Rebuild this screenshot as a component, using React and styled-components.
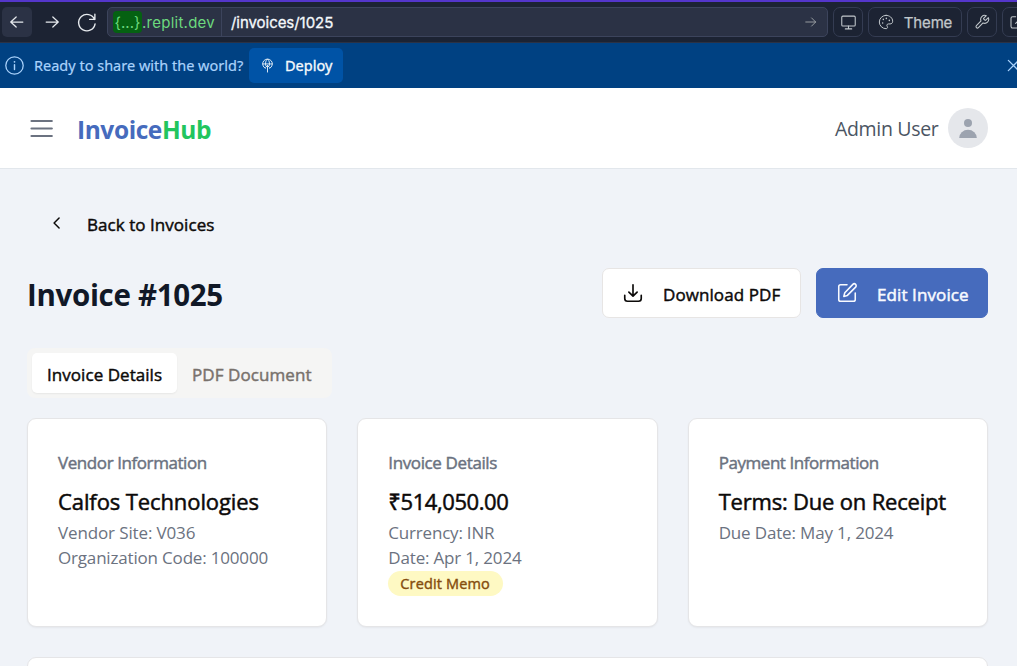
import React from 'react';
import styled, { createGlobalStyle } from 'styled-components';

const GlobalStyle = createGlobalStyle`
  * { box-sizing: border-box; }
  html, body { margin: 0; height: 666px; overflow: hidden; background: #f0f3f8; }
  body { font-family: "Open Sans", "Noto Sans", sans-serif; color: #0c0a09; }
  button { font: inherit; color: inherit; margin: 0; padding: 0; border: 0; background: none; }
  svg { flex: none; }
`;

const Page = styled.div`
  width: 1017px;
  height: 666px;
  overflow: hidden;
  background: #f0f3f8;
`;

const Label = styled.span`
  white-space: nowrap;
  letter-spacing: ${(p) => p.$track || 0}px;
  -webkit-text-stroke: ${(p) => p.$weight || 0}px currentColor;
`;

const BrowserBar = styled.div`
  display: flex;
  align-items: center;
  height: 43px;
  padding: 0 0 0 2px;
  border-top: 2px solid #5436cb;
  border-bottom: 1px solid #2b3245;
  background: #1c2333;
  color: #c2c8cc;
  font-family: Inter, Roboto, sans-serif;
  font-size: 15px;
  overflow: hidden;
`;

const NavButton = styled.button`
  flex: none;
  display: flex;
  align-items: center;
  justify-content: center;
  width: ${(p) => p.$w || 30}px;
  height: 30px;
  border-radius: 5px;
  color: #e6eaee;
  background: ${(p) => (p.$active ? '#2b3245' : 'transparent')};
`;

const AddressBar = styled.div`
  flex: none;
  display: flex;
  align-items: center;
  width: 721px;
  height: 30px;
  margin-left: 5px;
  padding: 0 9px 0 5px;
  border: 1px solid #3c445c;
  border-radius: 5px;
  background: #2b3245;
  color: #9da2a6;
`;

const Host = styled.div`
  display: flex;
  align-items: center;
  width: 109px;
  height: 28px;
  border-right: 1px solid #3c445c;
  color: #6cd97e;
`;

const HostChip = styled.span`
  display: flex;
  align-items: center;
  justify-content: center;
  width: 29px;
  height: 22px;
  border-radius: 4px;
  background: #056112;
`;

const Path = styled.span`
  flex: 1;
  padding-left: 9px;
  color: #f5f9fc;
`;

const ToolButton = styled.button`
  flex: none;
  display: flex;
  align-items: center;
  justify-content: center;
  gap: 10px;
  width: ${(p) => p.$w || 30}px;
  height: 30px;
  margin-left: 5px;
  border: 1px solid #343c52;
  border-radius: 7px;
`;

const Banner = styled.div`
  display: flex;
  align-items: center;
  height: 45px;
  padding-left: 5px;
  background: #004182;
  color: #a9d2fb;
  font-family: "Noto Sans", sans-serif;
  font-size: 14.5px;
  overflow: hidden;
`;

const BannerText = styled.div`
  flex: none;
  width: 225px;
  padding: 0 0 2px 10px;
`;

const DeployButton = styled.button`
  flex: none;
  display: flex;
  align-items: center;
  gap: 10px;
  width: 94px;
  height: 35px;
  padding: 0 0 1px 11px;
  border-radius: 5px;
  background: #0053a6;
  color: #f5f9fc;
`;

const BannerClose = styled.button`
  flex: none;
  display: flex;
  margin-left: 661px;
`;

const AppHeader = styled.header`
  display: flex;
  align-items: center;
  height: 81px;
  padding: 0 29px 1px 30px;
  border-bottom: 1px solid #e2e7ec;
  background: #fff;
`;

const MenuButton = styled.button`
  display: flex;
  padding-top: 3px;
  color: #6b7280;
`;

const Brand = styled.div`
  flex: 1;
  margin: 4px 0 0 24px;
  font-size: 24.5px;
  font-weight: 700;
  line-height: 32px;
  color: #466bbd;
`;

const BrandAccent = styled.span`
  color: #22c55e;
`;

const UserName = styled.div`
  width: 113px;
  padding-top: 3px;
  font-size: 19.5px;
  line-height: 28px;
  color: #4b5563;
`;

const Avatar = styled.div`
  display: flex;
  width: 40px;
  height: 40px;
  align-items: center;
  justify-content: center;
  border-radius: 50%;
  background: #e5e7eb;
`;

const Main = styled.main`
  padding: 30px 29px 0 27px;
`;

const BackLink = styled.button`
  display: flex;
  align-items: center;
  height: 50px;
  padding-left: 20px;
  font-size: 17px;
`;

const BackIcon = styled.span`
  display: flex;
  padding-bottom: 2px;
`;

const BackText = styled.span`
  padding: 1px 0 0 20px;
`;

const TitleRow = styled.div`
  display: flex;
  align-items: center;
  height: 50px;
  margin-top: 19px;
`;

const Title = styled.h1`
  flex: 1;
  margin: 3px 0 0;
  font-size: 29.5px;
  line-height: 38px;
  font-weight: 700;
  color: #111827;
`;

const ActionButton = styled.button`
  display: flex;
  align-items: center;
  width: ${(p) => p.$w}px;
  height: 50px;
  margin-left: ${(p) => p.$gap || 0}px;
  padding-left: 19px;
  border: 1px solid ${(p) => (p.$primary ? '#466bbd' : '#e7e5e4')};
  border-radius: 7px;
  background: ${(p) => (p.$primary ? '#466bbd' : '#fff')};
  color: ${(p) => (p.$primary ? '#f8faff' : '#0c0a09')};
  font-size: 17px;
`;

const ActionText = styled.span`
  padding: 3px 0 0 19px;
`;

const TabList = styled.div`
  display: flex;
  width: 305px;
  height: 50px;
  margin-top: 30px;
  padding: 5px;
  border-radius: 8px;
  background: #f5f5f4;
`;

const Tab = styled.button`
  display: flex;
  align-items: center;
  width: ${(p) => p.$w}px;
  height: 40px;
  padding: 3px 0 0 15px;
  border-radius: 5px;
  font-size: 17px;
  color: ${(p) => (p.$active ? '#0c0a09' : '#78716c')};
  background: ${(p) => (p.$active ? '#fff' : 'transparent')};
  box-shadow: ${(p) => (p.$active ? '0 1px 2px rgba(0,0,0,.06)' : 'none')};
`;

const Cards = styled.div`
  display: grid;
  grid-template-columns: repeat(3, 1fr);
  gap: 30px;
  margin-top: 20px;
`;

const Card = styled.section`
  height: 209px;
  padding: 31px 30px;
  border: 1px solid #e5e5e7;
  border-radius: 9px;
  background: #fff;
  box-shadow: 0 1px 2px rgba(0, 0, 0, 0.05);
`;

const CardTitle = styled.h3`
  margin: 0;
  font-size: 17px;
  line-height: 26px;
  font-weight: 400;
  color: #6b7280;
`;

const CardLead = styled.div`
  margin-top: 9px;
  font-size: 22px;
  line-height: 32px;
`;

const CardLine = styled.div`
  font-size: 17px;
  line-height: 25px;
  color: #6b7280;
`;

const CardLines = styled.div`
  padding: 3px 0 1px;
`;

const Badge = styled.div`
  display: flex;
  align-items: center;
  width: 115px;
  height: 25px;
  padding-left: 12px;
  border-radius: 13px;
  background: #fef9c3;
  color: #854d0e;
  font-size: 14.5px;
`;

const NextPanel = styled.section`
  height: 60px;
  margin-top: 30px;
  border: 1px solid #e5e5e7;
  border-radius: 9px;
  background: #fff;
`;

const Icon = ({ size = 20, w = 2, box = 24, children }) => (
  <svg width={size} height={size} viewBox={`0 0 ${box} ${box}`} fill="none" stroke="currentColor" strokeWidth={w} strokeLinecap="round" strokeLinejoin="round">
    {children}
  </svg>
);

const MEDIUM = 0.45;

const cards = [
  { title: 'Vendor Information', tt: -0.42, lead: 'Calfos Technologies', lt: -0.1, lines: [['Vendor Site: V036', -0.13], ['Organization Code: 100000', -0.18]] },
  { title: 'Invoice Details', tt: -0.38, lead: '₹514,050.00', lt: -0.42, lines: [['Currency: INR', -0.2], ['Date: Apr 1, 2024', -0.18]], badge: 'Credit Memo' },
  { title: 'Payment Information', tt: -0.45, lead: 'Terms: Due on Receipt', lt: -0.2, lines: [['Due Date: May 1, 2024', -0.16]] },
];

export default function App() {
  return (
    <Page>
      <GlobalStyle />
      <BrowserBar>
        <NavButton $active>
          <Icon w={1.5}><path d="M19 12H4.500M11 6l-6.500 6 6.500 6" /></Icon>
        </NavButton>
        <NavButton $w={40}>
          <Icon w={1.5}><path d="M5 12h14M13 6l6.500 6-6.500 6" /></Icon>
        </NavButton>
        <NavButton>
          <Icon size={22} w={1.5}><path d="M20.6 3.5v5.700h-5.700M20.2 9.200A9 9 0 1 0 20.800 14" /></Icon>
        </NavButton>
        <AddressBar>
          <Host>
            <HostChip><Label>{'{...}'}</Label></HostChip>
            <Label $track={0.25}>.replit.dev</Label>
          </Host>
          <Path><Label $weight={0.3} $track={-0.05}>/invoices/1025</Label></Path>
          <Icon size={14} w={1.6}><path d="M3 12h17M13 5l7 7-7 7" /></Icon>
        </AddressBar>
        <ToolButton>
          <Icon size={17} w={1.500}><rect x="2.500" y="3" width="19" height="14" rx="1.500" /><path d="M12 17v4M7.500 21h9" /></Icon>
        </ToolButton>
        <ToolButton $w={94}>
          <Icon size={16} w={1.500}>
            <path d="M12 2a10 10 0 0 0 0 20c1.600 0 2.300-1 2.300-2.100 0-1.400-1-1.700-1-3 0-1.200 1-2 2.200-2H18c2.400 0 4-1.500 4-4C22 5.800 17.500 2 12 2z" />
            <path d="M7 13.500v.1M8 8v.1M12.500 6.500v.1M17 9.500v.1" strokeWidth="2.200" />
          </Icon>
          <Label $weight={0.25} $track={-0.15}>Theme</Label>
        </ToolButton>
        <ToolButton>
          <Icon size={16} w={1.600}><path d="M14.700 6.300a1 1 0 0 0 0 1.400l1.600 1.600a1 1 0 0 0 1.400 0l3.770-3.770a6 6 0 0 1-7.940 7.940l-6.910 6.910a2.120 2.120 0 0 1-3-3l6.910-6.910a6 6 0 0 1 7.940-7.940z" /></Icon>
        </ToolButton>
        <ToolButton>
          <Icon size={16} w={1.600}><path d="M10 4H5.500A2.500 2.500 0 0 0 3 6.500v12A2.500 2.500 0 0 0 5.500 21h12a2.500 2.500 0 0 0 2.500-2.500V14M14 3h7v7M21 3 10 14" /></Icon>
        </ToolButton>
      </BrowserBar>

      <Banner>
        <Icon size={19} w={1.600}><circle cx="12" cy="12" r="11" /><path d="M12 11v6" strokeWidth="1.800" /><path d="M12 7.300v.1" strokeWidth="2.200" /></Icon>
        <BannerText><Label $weight={0.2}>Ready to share with the world?</Label></BannerText>
        <DeployButton>
          <Icon size={15} w={1.400}>
            <path d="M8.500 16.500a7.800 7.800 0 1 1 7 0M4.500 9.500h15M9.300 12.500c-1.200-3.800-.4-8.500 2.700-11 3.100 2.500 3.900 7.200 2.700 11M12 22.500V12M9 15l3-3 3 3" />
          </Icon>
          <Label $weight={0.35}>Deploy</Label>
        </DeployButton>
        <BannerClose><Icon size={19} w={1.600}><path d="M5.500 5.500l13 13M18.500 5.500l-13 13" /></Icon></BannerClose>
      </Banner>

      <AppHeader>
        <MenuButton><Icon size={23} w={2.200} box={23}><path d="M1.500 3h20.300M1.500 10.500h20.300M1.500 18h20.300" /></Icon></MenuButton>
        <Brand><Label $track={-0.42}>Invoice<BrandAccent>Hub</BrandAccent></Label></Brand>
        <UserName><Label $track={-0.33}>Admin User</Label></UserName>
        <Avatar>
          <svg width="18" height="20" viewBox="0 0 18 20" fill="#9ca3af">
            <circle cx="9" cy="5" r="4" />
            <path d="M.2 20a8.800 8.200 0 0 1 17.600 0z" />
          </svg>
        </Avatar>
      </AppHeader>

      <Main>
        <BackLink>
          <BackIcon><Icon size={20} w={1.800}><path d="M14.500 6l-6 6 6 6" /></Icon></BackIcon>
          <BackText><Label $weight={MEDIUM} $track={0.05}>Back to Invoices</Label></BackText>
        </BackLink>
        <TitleRow>
          <Title><Label $track={-0.32}>Invoice #1025</Label></Title>
          <ActionButton $w={199}>
            <Icon size={22} w={1.800}><path d="M21 14.500v3.500a3 3 0 0 1-3 3H6a3 3 0 0 1-3-3v-3.500M7.500 11l4.500 4.500 4.500-4.500M12 15V3" /></Icon>
            <ActionText><Label $weight={MEDIUM} $track={0.08}>Download PDF</Label></ActionText>
          </ActionButton>
          <ActionButton $w={172} $gap={15} $primary>
            <Icon size={22} w={1.700}><path d="M12 3H5a2 2 0 0 0-2 2v14a2 2 0 0 0 2 2h14a2 2 0 0 0 2-2v-7" /><path d="M18.400 2.600a2.120 2.120 0 0 1 3 3L12.400 14.600 8.500 15.700l1.100-4z" /></Icon>
            <ActionText><Label $weight={0.5} $track={0.1}>Edit Invoice</Label></ActionText>
          </ActionButton>
        </TitleRow>
        <TabList>
          <Tab $active $w={145}><Label $weight={MEDIUM} $track={0.05}>Invoice Details</Label></Tab>
          <Tab $w={150}><Label $weight={MEDIUM} $track={0.08}>PDF Document</Label></Tab>
        </TabList>
        <Cards>
          {cards.map((c) => (
            <Card key={c.title}>
              <CardTitle><Label $weight={MEDIUM} $track={c.tt}>{c.title}</Label></CardTitle>
              <CardLead><Label $weight={0.5} $track={c.lt}>{c.lead}</Label></CardLead>
              <CardLines>
                {c.lines.map(([t, k]) => <CardLine key={t}><Label $track={k}>{t}</Label></CardLine>)}
              </CardLines>
              {c.badge && <Badge><Label $weight={0.4} $track={0.15}>{c.badge}</Label></Badge>}
            </Card>
          ))}
        </Cards>
        <NextPanel />
      </Main>
    </Page>
  );
}
